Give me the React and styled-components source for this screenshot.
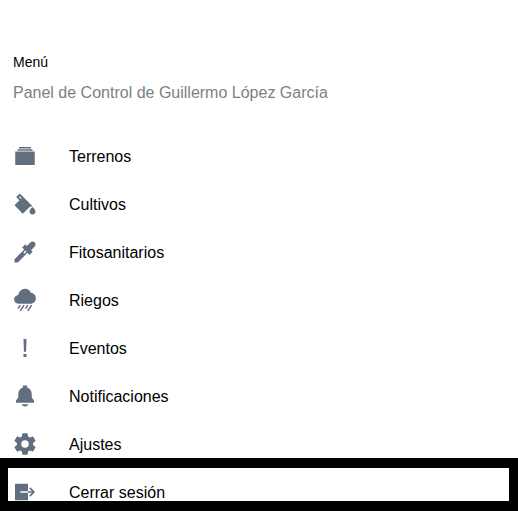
import React from "react";
import styled, { createGlobalStyle } from "styled-components";
import {
  IoAlbumsSharp,
  IoColorFillSharp,
  IoEyedropSharp,
  IoRainySharp,
  IoAlertSharp,
  IoNotificationsSharp,
  IoSettingsSharp,
} from "react-icons/io5";

const GlobalStyle = createGlobalStyle`
  *, *::before, *::after { box-sizing: border-box; }
  body {
    margin: 0;
    overflow: hidden;
    background: #fff;
    color: #000;
    font-family: "Liberation Sans", Arial, sans-serif;
  }
`;

const Panel = styled.aside`
  position: relative;
  height: 511px;
  overflow: hidden;
  padding: 52px 13px 0;
`;

const Header = styled.header`
  height: 80px;
`;

const Title = styled.h1`
  margin: 0;
  font-size: 14px;
  font-weight: 400;
  line-height: 20px;
`;

const Owner = styled.p`
  margin: 10px 0 0;
  font-size: 16px;
  line-height: 22px;
  color: #7c7f83;
`;

const MenuList = styled.ul`
  margin: 0;
  padding: 0;
  list-style: none;
`;

const MenuItem = styled.li`
  display: flex;
  align-items: center;
  gap: 32px;
  height: 48px;
  font-size: 16px;

  svg {
    flex: none;
    width: 24px;
    height: 24px;
    color: #616e7e;
  }
`;

const Label = styled.span`
  padding-top: 2px;
  line-height: 20px;
`;

/* Focus outline drawn over the last entry */
const Highlight = styled.div`
  position: absolute;
  inset: 458px 0 0;
  border: solid #000;
  border-width: 10px 9px 10px 8px;
  pointer-events: none;
`;

function ExitIcon(props) {
  return (
    <svg viewBox="0 0 24 24" fill="none" {...props}>
      <path
        fill="currentColor"
        d="M2 3.8h13v7.4H7.3v1.6H15v7.4H2z"
      />
      <path
        stroke="currentColor"
        strokeWidth="1.6"
        d="M15 12h5.8M16.8 7.9l4.1 4.1-4.1 4.1"
      />
    </svg>
  );
}

const items = [
  { label: "Terrenos", Icon: IoAlbumsSharp },
  { label: "Cultivos", Icon: IoColorFillSharp },
  { label: "Fitosanitarios", Icon: IoEyedropSharp },
  { label: "Riegos", Icon: IoRainySharp },
  { label: "Eventos", Icon: IoAlertSharp },
  { label: "Notificaciones", Icon: IoNotificationsSharp },
  { label: "Ajustes", Icon: IoSettingsSharp },
  { label: "Cerrar sesión", Icon: ExitIcon },
];

export default function App() {
  return (
    <>
      <GlobalStyle />
      <Panel>
        <Header>
          <Title>Menú</Title>
          <Owner>Panel de Control de Guillermo López García</Owner>
        </Header>
        <MenuList>
          {items.map(({ label, Icon }) => (
            <MenuItem key={label}>
              <Icon aria-hidden="true" />
              <Label>{label}</Label>
            </MenuItem>
          ))}
        </MenuList>
        <Highlight />
      </Panel>
    </>
  );
}
